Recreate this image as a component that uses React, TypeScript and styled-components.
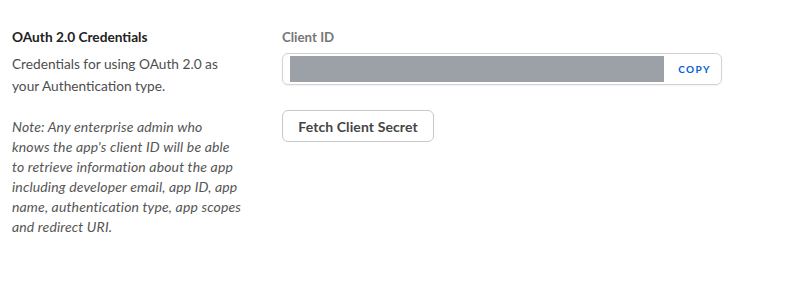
import styled, { createGlobalStyle } from "styled-components";

const GlobalStyle = createGlobalStyle`
    html, body {
        margin: 0;
        padding: 0;
        background: #fff;
    }
    body {
        font-family: Lato, "Open Sans", sans-serif;
        -webkit-font-smoothing: antialiased;
    }
`;

const Section = styled.section`
    display: grid;
    grid-template-columns: 270px 440px;
    padding: 27px 12px;
`;

const Info = styled.div`
    display: flex;
    flex-direction: column;
    padding-right: 40px;
`;

const Heading = styled.h3`
    margin: 0 0 6px;
    font-size: 13.7px;
    line-height: 20px;
    font-weight: 700;
    color: #222;
`;

const Description = styled.p`
    margin: 0 0 20px;
    font-size: 13.7px;
    line-height: 22px;
    color: #4e4e4e;
`;

const Note = styled.p`
    margin: 0;
    font-size: 14px;
    letter-spacing: 0.15px;
    line-height: 20px;
    font-style: italic;
    color: #555;
`;

const Fields = styled.div`
    display: flex;
    flex-direction: column;
    align-items: flex-start;
`;

const Label = styled.label`
    font-size: 13.3px;
    line-height: 20px;
    font-weight: 700;
    color: #767676;
    margin-bottom: 6px;
`;

const CopyField = styled.div`
    box-sizing: border-box;
    width: 440px;
    height: 32px;
    display: flex;
    align-items: stretch;
    padding: 2px 0 2px 7px;
    border: 1px solid #d3d3d3;
    border-radius: 6px;
    box-shadow: 0 1px 2px rgba(0, 0, 0, 0.06);
    margin-bottom: 25px;
`;

const Masked = styled.div`
    width: 374px;
    background: #9ca0a7;
`;

const CopyButton = styled.button`
    flex: 1;
    border: none;
    background: none;
    font-family: inherit;
    font-size: 10px;
    font-weight: 700;
    letter-spacing: 1.4px;
    color: #0061d5;
    text-align: center;
    padding: 0 0 0 4px;
    cursor: pointer;
`;

const SecondaryButton = styled.button`
    box-sizing: border-box;
    height: 32px;
    width: 152px;
    padding: 0 10px;
    border: 1px solid #c8c8c8;
    border-radius: 6px;
    background: #fff;
    font-family: inherit;
    font-size: 14px;
    letter-spacing: 0.1px;
    font-weight: 700;
    color: #444;
    cursor: pointer;
`;

export default function App() {
    return (
        <>
            <GlobalStyle />
            <Section>
                <Info>
                    <Heading>OAuth 2.0 Credentials</Heading>
                    <Description>
                        Credentials for using OAuth 2.0 as your Authentication type.
                    </Description>
                    <Note>
                        Note: Any enterprise admin who knows the app's client ID will be able
                        to retrieve information about the app including developer email, app
                        ID, app name, authentication type, app scopes and redirect URI.
                    </Note>
                </Info>
                <Fields>
                    <Label>Client ID</Label>
                    <CopyField>
                        <Masked />
                        <CopyButton>COPY</CopyButton>
                    </CopyField>
                    <SecondaryButton>Fetch Client Secret</SecondaryButton>
                </Fields>
            </Section>
        </>
    );
}
